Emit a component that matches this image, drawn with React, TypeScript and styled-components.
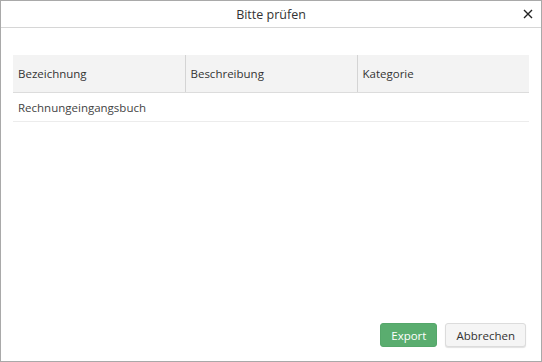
import React from 'react'
import styled, { createGlobalStyle } from 'styled-components'

const GlobalStyle = createGlobalStyle`
  html, body {
    margin: 0;
    padding: 0;
    background: #fff;
  }
  body {
    font-family: "Open Sans", "Liberation Sans", sans-serif;
    color: #333;
  }
`

const columns = ['Bezeichnung', 'Beschreibung', 'Kategorie']

const rows = [
  { name: 'Rechnungeingangsbuch', description: '', category: '' },
]

const App = () => {
  return (
    <>
      <GlobalStyle />
      <Dialog>
        <TitleBar>
          <Title>Bitte prüfen</Title>
          <CloseButton aria-label="Schließen">
            <svg width="10" height="10" viewBox="0 0 10 10">
              <path d="M1 1 L9 9 M9 1 L1 9" stroke="#222" strokeWidth="1.4" />
            </svg>
          </CloseButton>
        </TitleBar>
        <Body>
          <Table>
            <thead>
              <tr>
                {columns.map(col => <HeadCell key={col}>{col}</HeadCell>)}
              </tr>
            </thead>
            <tbody>
              {rows.map(row => (
                <tr key={row.name}>
                  <Cell>{row.name}</Cell>
                  <Cell>{row.description}</Cell>
                  <Cell>{row.category}</Cell>
                </tr>
              ))}
            </tbody>
          </Table>
        </Body>
        <Footer>
          <Button $primary>Export</Button>
          <Button>Abbrechen</Button>
        </Footer>
      </Dialog>
    </>
  )
}

const Dialog = styled.div`
  box-sizing: border-box;
  width: 542px;
  height: 362px;
  border: 1px solid #a9a9a9;
  display: flex;
  flex-direction: column;
  background: #fff;
`

const TitleBar = styled.div`
  position: relative;
  height: 26px;
  border-bottom: 1px solid #d6d6d6;
  display: flex;
  align-items: center;
  justify-content: center;
`

const Title = styled.div`
  font-size: 12.5px;
  color: #333;
`

const CloseButton = styled.button`
  position: absolute;
  right: 8px;
  top: 8px;
  padding: 0;
  border: none;
  background: none;
  width: 10px;
  height: 10px;
  display: flex;
`

const Body = styled.div`
  flex: 1;
  padding: 27px 12px 0 12px;
`

const Table = styled.table`
  width: 100%;
  border-collapse: collapse;
  table-layout: fixed;
  font-size: 11.5px;
`

const HeadCell = styled.th`
  height: 37px;
  padding: 0 5px;
  background: #f3f3f3;
  border-bottom: 1px solid #dcdcdc;
  border-left: 1px solid #d4d4d4;
  font-weight: normal;
  text-align: left;
  color: #333;
  &:first-child {
    border-left: none;
  }
`

const Cell = styled.td`
  height: 28px;
  padding: 0 5px;
  border-bottom: 1px solid #ececec;
  color: #444;
`

const Footer = styled.div`
  display: flex;
  justify-content: flex-end;
  gap: 8px;
  padding: 0 15px 14px 0;
`

const Button = styled.button<{ $primary?: boolean }>`
  height: 24px;
  padding: 0 10px;
  border-radius: 3px;
  font-family: "Open Sans", "Liberation Sans", sans-serif;
  font-size: 11.5px;
  border: 1px solid ${({ $primary }) => ($primary ? '#55a76a' : '#dcdcdc')};
  background: ${({ $primary }) => ($primary ? '#5aad6f' : '#f5f5f5')};
  color: ${({ $primary }) => ($primary ? '#fff' : '#333')};
  box-shadow: ${({ $primary }) => ($primary ? 'none' : '0 1px 1px rgba(0,0,0,0.12)')};
`

export default App
